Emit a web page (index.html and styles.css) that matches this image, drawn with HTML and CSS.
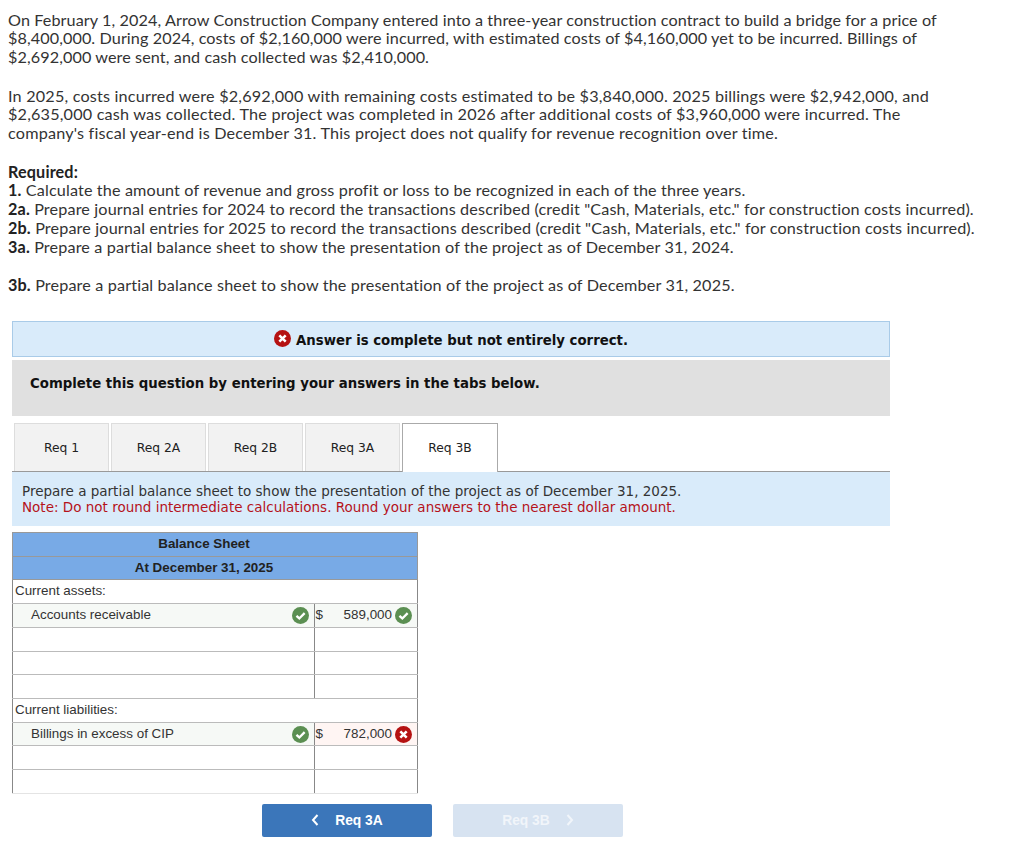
FILE: index.html
```html
<!DOCTYPE html>
<html lang="en">
<head>
<meta charset="utf-8">
<title>Balance Sheet</title>
<link rel="stylesheet" href="styles.css">
</head>
<body>
<svg class="defs" width="0" height="0" aria-hidden="true">
  <symbol id="ok" viewBox="0 0 16 16"><circle cx="8" cy="8" r="8" fill="#5b8f52"/><path d="M4.2 8.300l2.700 2.500 5-5" fill="none" stroke="#fff" stroke-width="2.200"/></symbol>
  <symbol id="bad" viewBox="0 0 16 16"><circle cx="8" cy="8" r="8" fill="#b51212"/><path d="M5 5l6 6M11 5l-6 6" fill="none" stroke="#fff" stroke-width="2.400"/></symbol>
</svg>
<main class="page">
  <section class="problem">
    <p class="para">On February 1, 2024, Arrow Construction Company entered into a three-year construction contract to build a bridge for a price of<br>$8,400,000. During 2024, costs of $2,160,000 were incurred, with estimated costs of $4,160,000 yet to be incurred. Billings of<br>$2,692,000 were sent, and cash collected was $2,410,000.</p>
    <p class="para wide">In 2025, costs incurred were $2,692,000 with remaining costs estimated to be $3,840,000. 2025 billings were $2,942,000, and<br>$2,635,000 cash was collected. The project was completed in 2026 after additional costs of $3,960,000 were incurred. The<br>company's fiscal year-end is December 31. This project does not qualify for revenue recognition over time.</p>
    <p class="para mid"><b>Required:</b><br><b>1.</b> Calculate the amount of revenue and gross profit or loss to be recognized in each of the three years.<br><b>2a.</b> Prepare journal entries for 2024 to record the transactions described (credit "Cash, Materials, etc." for construction costs incurred).<br><b>2b.</b> Prepare journal entries for 2025 to record the transactions described (credit "Cash, Materials, etc." for construction costs incurred).<br><b>3a.</b> Prepare a partial balance sheet to show the presentation of the project as of December 31, 2024.</p>
    <p class="para mid"><b>3b.</b> Prepare a partial balance sheet to show the presentation of the project as of December 31, 2025.</p>
  </section>

  <section class="quiz">
    <div class="alert"><svg class="icon-lg"><use href="#bad"/></svg><b class="alert-text">Answer is complete but not entirely correct.</b></div>
    <div class="instruct"><b>Complete this question by entering your answers in the tabs below.</b></div>
    <div class="tabs">
      <div class="tab">Req 1</div>
      <div class="tab">Req 2A</div>
      <div class="tab">Req 2B</div>
      <div class="tab">Req 3A</div>
      <div class="tab active">Req 3B</div>
    </div>
    <div class="prompt">
      <div>Prepare a partial balance sheet to show the presentation of the project as of December 31, 2025.</div>
      <div class="note">Note: Do not round intermediate calculations. Round your answers to the nearest dollar amount.</div>
    </div>
    <table class="sheet">
      <colgroup><col class="col-a"><col class="col-b"></colgroup>
      <tr class="head"><th colspan="2">Balance Sheet</th></tr>
      <tr class="head"><th colspan="2">At December 31, 2025</th></tr>
      <tr><td colspan="2">Current assets:</td></tr>
      <tr class="filled">
        <td><div class="label"><span class="indent">Accounts receivable</span><svg class="icon"><use href="#ok"/></svg></div></td>
        <td><div class="amount"><span>$</span><span class="value">589,000</span><svg class="icon"><use href="#ok"/></svg></div></td>
      </tr>
      <tr><td></td><td></td></tr>
      <tr><td></td><td></td></tr>
      <tr><td></td><td></td></tr>
      <tr><td colspan="2">Current liabilities:</td></tr>
      <tr class="filled">
        <td><div class="label"><span class="indent">Billings in excess of CIP</span><svg class="icon"><use href="#ok"/></svg></div></td>
        <td class="wrong"><div class="amount"><span>$</span><span class="value">782,000</span><svg class="icon"><use href="#bad"/></svg></div></td>
      </tr>
      <tr><td></td><td></td></tr>
      <tr class="last"><td></td><td></td></tr>
    </table>
    <nav class="pager">
      <div class="btn primary"><svg class="chev" viewBox="0 0 8 12"><path d="M6.500 1L2 6l4.500 5" fill="none" stroke="currentColor" stroke-width="2"/></svg><span>Req 3A</span></div>
      <div class="btn disabled"><span>Req 3B</span><svg class="chev" viewBox="0 0 8 12"><path d="M1.500 1L6 6l-4.500 5" fill="none" stroke="currentColor" stroke-width="2"/></svg></div>
    </nav>
  </section>
</main>
</body>
</html>
```
FILE: styles.css
```css
* { box-sizing: border-box; }
html, body { margin: 0; padding: 0; background: #fff; }
.defs { display: block; height: 0; }
.page { width: 1024px; height: 850px; overflow: hidden; }
.problem {
  padding: 10.6px 0 0 8px;
  font-family: "Lato", "Liberation Sans", sans-serif;
  font-size: 16.2px;
  letter-spacing: 0.09px;
  line-height: 18.8px;
  color: #333;
  white-space: nowrap;
}
.para { margin: 0 0 19.6px; }
.para:last-child { margin-bottom: 0; }
.wide { letter-spacing: 0.19px; }
.mid { letter-spacing: 0.14px; }
.problem b { color: #222; }

.quiz { margin: 26px 0 0 12px; width: 878px; font-family: "DejaVu Sans", Verdana, sans-serif; }
.alert {
  height: 36px;
  background: #d9ebfa;
  border: 1px solid #a9cbe8;
  display: flex;
  align-items: center;
  justify-content: center;
  gap: 5px;
  font-size: 13.3px;
  color: #111;
}
.alert-text { padding-top: 3px; }
.icon-lg { width: 17px; height: 17px; flex: none; }
.instruct {
  margin-top: 3px;
  height: 56px;
  padding: 15px 0 0 18px;
  background: #e0e0e0;
  font-size: 13.3px;
  line-height: 17px;
  color: #111;
}
.tabs {
  margin-top: 7px;
  height: 49px;
  padding-left: 2px;
  display: flex;
  gap: 2px;
  border-bottom: 1px solid #999;
}
.tab {
  width: 95px;
  height: 48px;
  padding-top: 1px;
  background: #f2f2f2;
  border: 1px solid #ddd;
  border-bottom: 0;
  display: flex;
  align-items: center;
  justify-content: center;
  font-size: 12.3px;
  color: #222;
}
.tab.active {
  width: 96px;
  height: 49px;
  background: #fff;
  border-color: #aaa;
}
.prompt {
  height: 54px;
  padding: 11px 0 0 10px;
  background: #d9ebfa;
  font-size: 13.5px;
  line-height: 16px;
  color: #333;
}
.note { color: #b5121b; }

.sheet {
  margin-top: 6px;
  width: 406px;
  table-layout: fixed;
  border-collapse: collapse;
  font-family: "Liberation Sans", Arial, sans-serif;
  font-size: 13.4px;
  color: #333;
}
.col-a { width: 301.5px; }
.sheet tr { height: 23.73px; }
.sheet td, .sheet th { padding: 0 0 2px; border: 1px solid #999; }
.sheet td { border-color: #bbb #888; padding-left: 2px; }
.sheet td + td { padding: 0 5px 0 1px; }
.sheet th { background: #78aae6; font-size: 13.4px; color: #222; padding-right: 22px; }
.sheet .last td { border-bottom-color: #e4e4e4; }
.filled td { background: #f6f9f6; padding-bottom: 0; }
.filled td.wrong { background: #fff5f3; }
.label, .amount { display: flex; align-items: center; height: 21px; }
.indent { padding-left: 16px; flex: 1; padding-bottom: 2px; }
.amount span { padding-bottom: 2px; }
.label .icon { margin-right: 5px; }
.value { flex: 1; text-align: right; padding-right: 3px; }
.icon { width: 17px; height: 17px; flex: none; }

.pager { margin: 10px 0 0 250px; display: flex; gap: 21px; }
.btn {
  width: 170px;
  height: 33px;
  border-radius: 2px;
  display: flex;
  align-items: center;
  justify-content: center;
  gap: 16px;
  font-family: "Liberation Sans", Arial, sans-serif;
  font-size: 13.800px;
  font-weight: bold;
  color: #fff;
}
.primary { background: #3b76ba; }
.disabled { background: #d7e3f1; color: #f1f5fa; }
.chev { width: 8px; height: 12px; }
```
